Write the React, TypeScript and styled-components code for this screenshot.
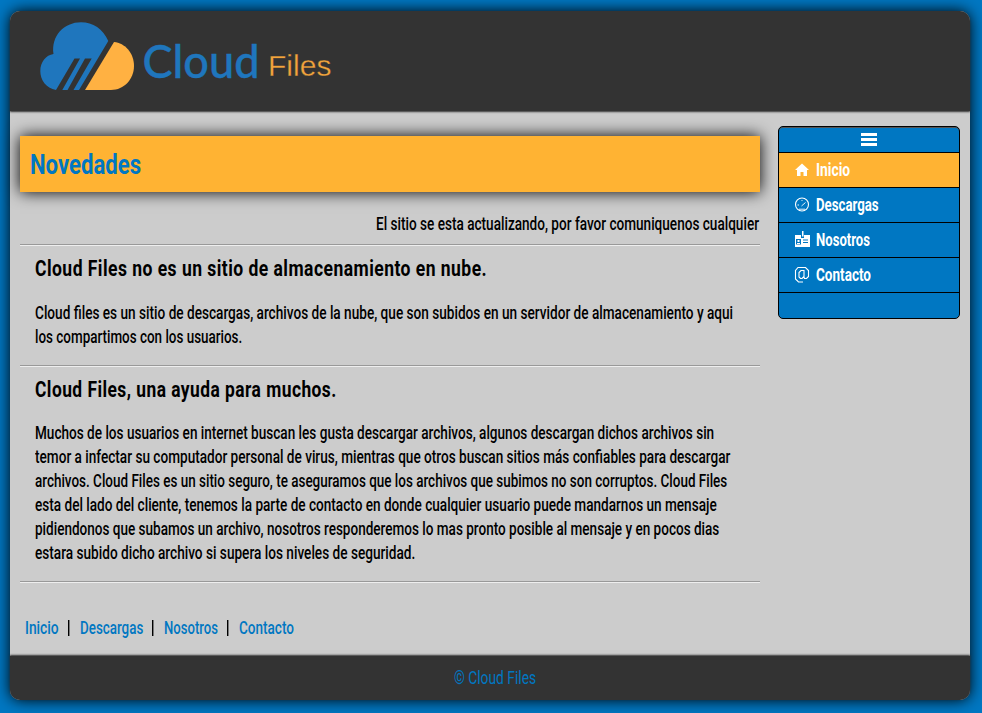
import React, { useLayoutEffect, useRef, useState } from "react";
import styled, { createGlobalStyle } from "styled-components";

const blue = "#0077c2";
const orange = "#ffb333";

const GlobalStyle = createGlobalStyle`
  * { box-sizing: border-box; }
  html, body { height: 713px; overflow: hidden; }
  body {
    margin: 0;
    background: ${blue};
    color: #000;
    font-family: Roboto, "Liberation Sans", sans-serif;
    font-size: 18.7px;
    font-weight: 500;
    line-height: 24px;
  }
  h1, h2, p { margin: 0; font-size: inherit; font-weight: inherit; }
`;

const Slot = styled.span<{ $width: number }>`
  display: block;
  flex: none;
  width: ${(p) => p.$width}px;
  white-space: nowrap;
`;

const Glyphs = styled.span`
  display: inline-block;
  transform-origin: 0 50%;
`;

/* A single line of text condensed to a fixed width. */
function Condensed({ width, children }: { width: number; children: string }) {
  const ref = useRef<HTMLSpanElement>(null);
  const [scale, setScale] = useState(1);
  useLayoutEffect(() => {
    if (ref.current) setScale(width / ref.current.offsetWidth);
  }, [width, children]);
  return (
    <Slot $width={width}>
      <Glyphs ref={ref} style={{ transform: `scaleX(${scale})` }}>
        {children}
      </Glyphs>
    </Slot>
  );
}

const Page = styled.div`
  width: 960px;
  height: 689px;
  margin: 11px 0 0 10px;
  display: flex;
  flex-direction: column;
  background: #ccc;
  border-radius: 10px;
  box-shadow: 0 0 15px #000;
`;

const Header = styled.header`
  height: 100px;
  flex: none;
  padding: 8px 0 0 25px;
  background: #333;
  border-radius: 10px 10px 0 0;
  box-shadow: 0 1px 2px #333;
`;

const Body = styled.div`
  flex: 1;
  min-height: 0;
  display: flex;
  justify-content: space-between;
  padding: 15px 10px 0;
`;

const Main = styled.main`
  width: 740px;
  padding-top: 10px;
`;

const Banner = styled.h1`
  height: 56px;
  padding: 0 10px;
  background: ${orange};
  color: ${blue};
  box-shadow: 0 0 15px #000;
  font-size: 28.5px;
  font-weight: 700;
  line-height: 58px;
`;

const Ticker = styled.p`
  display: flex;
  justify-content: flex-end;
  height: 52px;
  padding: 20px 1px 0 0;
`;

const Article = styled.article<{ $height: number }>`
  height: ${(p) => p.$height}px;
  padding: 10px 15px 0;
  border-top: 1px solid #999;
  box-shadow: inset 0 1px #eee;
`;

const Heading = styled.h2<{ $height: number }>`
  height: ${(p) => p.$height}px;
  font-size: 22.5px;
  font-weight: 700;
  line-height: 26px;
  letter-spacing: 0.6px;
`;

const LinkRow = styled.nav`
  display: flex;
  align-items: center;
  height: 74px;
  padding: 18px 5px 0;
  border-top: 1px solid #999;
  box-shadow: inset 0 1px #eee;
  color: ${blue};
`;

const Bar = styled.span`
  width: 2px;
  height: 16px;
  margin: 0 10px 0 9px;
  background: linear-gradient(to right, #000 50%, #777 50%);
`;

const Menu = styled.nav`
  width: 182px;
  height: 193px;
  overflow: hidden;
  background: ${blue};
  border: 1px solid #000;
  border-radius: 5px;
  box-shadow: inset 0 1px #555;
  color: #fff;
  font-weight: 700;
`;

const MenuTop = styled.div`
  height: 25px;
  display: flex;
  flex-direction: column;
  align-items: center;
  gap: 2px;
  padding-top: 6px;
`;

const Stripe = styled.span`
  width: 16px;
  height: 3px;
  background: #fff;
`;

const MenuItem = styled.div<{ $active?: boolean }>`
  height: 35px;
  display: flex;
  align-items: center;
  gap: 6px;
  padding-left: 15px;
  border-top: 1px solid #000;
  background: ${(p) => (p.$active ? orange : blue)};
`;

const MenuEnd = styled.div`
  height: 26px;
  border-top: 1px solid #000;
`;

const Icon = styled.svg`
  display: block;
  flex: none;
  overflow: visible;
`;

const Footer = styled.footer`
  height: 44px;
  flex: none;
  display: flex;
  justify-content: center;
  padding: 10px 0 0 10px;
  background: #333;
  border-radius: 0 0 10px 10px;
  box-shadow: 0 -1px 2px #333;
  color: ${blue};
  font-weight: 400;
`;

function Logo() {
  return (
    <Icon width="310" height="84" viewBox="35 19 310 84">
      <path
        fill="#1f76bd"
        d="M56 90C46 88 40.300 80 40.300 71C40.300 62 46 55 53.500 54C51 36 64 22.300 81 22.300C93 22.300 103 29 108.300 41L79 90H73.500L91.700 58.500H85L67.500 90H62.300L80 58.500H74.500Z"
      />
      <path fill="#ffb142" d="M114 42C125 43 134 53 134 66C134 79 124 90 111 90H85Z" />
      <text x="142.500" y="78" textLength="117" lengthAdjust="spacingAndGlyphs" fill="#1f76bd" stroke="#1f76bd" strokeWidth=".4" fontFamily="Lato, sans-serif" fontSize="45.500">
        Cloud
      </text>
      <text x="268" y="75.500" textLength="63.500" lengthAdjust="spacing" fill="#f2a43c" stroke="#333" strokeWidth=".3" fontFamily="Liberation Sans, sans-serif" fontSize="30">
        Files
      </text>
    </Icon>
  );
}

const icons: Record<string, React.ReactNode> = {
  Inicio: <path fill="#fff" d="M8 1.500L15 8H13V14H9.500V10H6.500V14H3V8H1Z" />,
  Descargas: (
    <g fill="none" stroke="#fff">
      <circle cx="8" cy="7.500" r="6.500" strokeWidth="1.100" />
      <path d="M7.500 9L11.500 5.500M3.500 8H5M5 12.200H11M8 3V4" strokeWidth=".9" />
    </g>
  ),
  Nosotros: (
    <g>
      <path fill="#fff" d="M1 3H7V6H10V3H16V15H1Z" />
      <path fill="#fff" d="M8 -1H9.500V4.500H8Z" />
      <path fill={blue} d="M9 7.500H14V8.500H9ZM9 10H14V11H9ZM2 7H7V12.500H2Z" />
      <path fill="#fff" d="M3.500 8H5.500V10H3.500ZM3 11H6V12H3Z" />
    </g>
  ),
  Contacto: (
    <path
      fill="none"
      stroke="#fff"
      strokeWidth="1.100"
      d="M9 15H4.500L1.500 12V3.500L4 .5H11.500L14.500 3.500V9.500L12.500 11.500H10.500L10 10V3.500H7L5 5.500V10L6.500 11.500H8L10 9.500"
    />
  ),
};

const links = [
  { label: "Inicio", width: 34 },
  { label: "Descargas", width: 63 },
  { label: "Nosotros", width: 54 },
  { label: "Contacto", width: 55 },
];

const articles = [
  {
    height: 121,
    titleHeight: 46,
    title: "Cloud Files no es un sitio de almacenamiento en nube.",
    titleWidth: 452,
    lines: [
      ["Cloud files es un sitio de descargas, archivos de la nube, que son subidos en un servidor de almacenamiento y aqui", 698],
      ["los compartimos con los usuarios.", 207],
    ],
  },
  {
    height: 216,
    titleHeight: 45,
    title: "Cloud Files, una ayuda para muchos.",
    titleWidth: 302,
    lines: [
      ["Muchos de los usuarios en internet buscan les gusta descargar archivos, algunos descargan dichos archivos sin", 679],
      ["temor a infectar su computador personal de virus, mientras que otros buscan sitios más confiables para descargar", 695],
      ["archivos. Cloud Files es un sitio seguro, te aseguramos que los archivos que subimos no son corruptos. Cloud Files", 692],
      ["esta del lado del cliente, tenemos la parte de contacto en donde cualquier usuario puede mandarnos un mensaje", 682],
      ["pidiendonos que subamos un archivo, nosotros responderemos lo mas pronto posible al mensaje y en pocos dias", 684],
      ["estara subido dicho archivo si supera los niveles de seguridad.", 380],
    ],
  },
] as { height: number; titleHeight: number; title: string; titleWidth: number; lines: [string, number][] }[];

export default function App() {
  return (
    <>
      <GlobalStyle />
      <Page>
        <Header>
          <Logo />
        </Header>
        <Body>
          <Main>
            <Banner>
              <Condensed width={111}>Novedades</Condensed>
            </Banner>
            <Ticker>
              <Condensed width={383}>El sitio se esta actualizando, por favor comuniquenos cualquier</Condensed>
            </Ticker>
            {articles.map((a) => (
              <Article key={a.title} $height={a.height}>
                <Heading $height={a.titleHeight}>
                  <Condensed width={a.titleWidth}>{a.title}</Condensed>
                </Heading>
                {a.lines.map(([text, width]) => (
                  <Condensed key={text} width={width}>
                    {text}
                  </Condensed>
                ))}
              </Article>
            ))}
            <LinkRow>
              {links.map((l, i) => (
                <React.Fragment key={l.label}>
                  {i > 0 && <Bar />}
                  <Condensed width={l.width}>{l.label}</Condensed>
                </React.Fragment>
              ))}
            </LinkRow>
          </Main>
          <Menu>
            <MenuTop>
              <Stripe />
              <Stripe />
              <Stripe />
            </MenuTop>
            {links.map((l, i) => (
              <MenuItem key={l.label} $active={i === 0}>
                <Icon width="16" height="16" viewBox="0 0 16 16">
                  {icons[l.label]}
                </Icon>
                <Condensed width={l.width}>{l.label}</Condensed>
              </MenuItem>
            ))}
            <MenuEnd />
          </Menu>
        </Body>
        <Footer>
          <Condensed width={82}>© Cloud Files</Condensed>
        </Footer>
      </Page>
    </>
  );
}
